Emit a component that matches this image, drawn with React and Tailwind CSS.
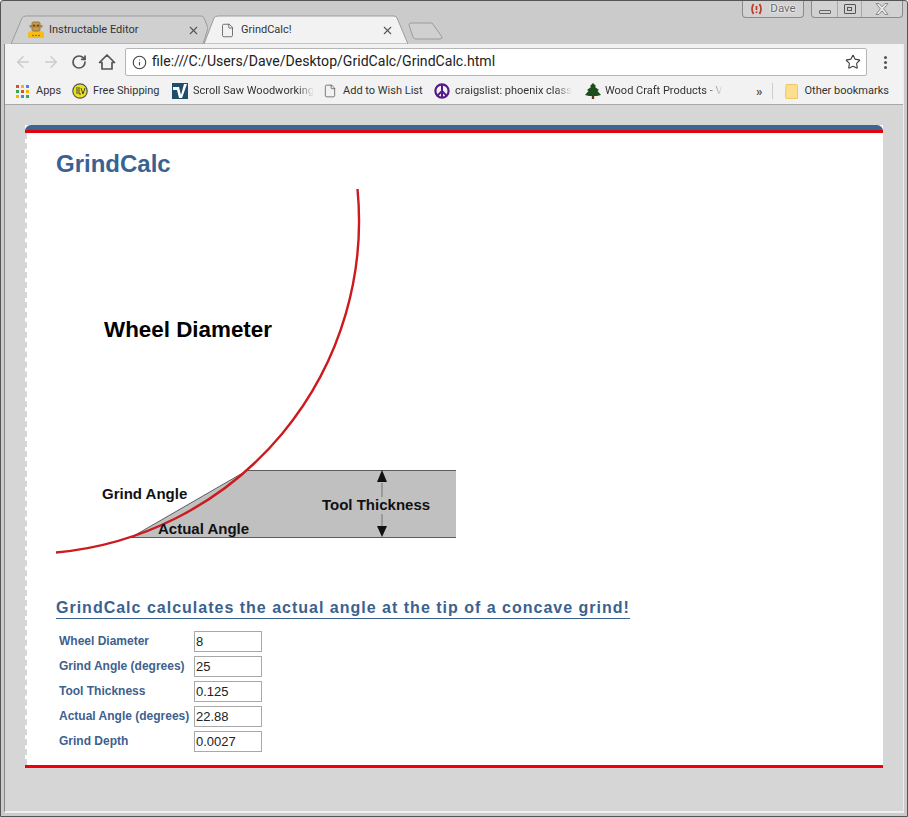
import React from "react";
import { ArrowLeft, ArrowRight, RotateCw, Info, Star, X, File } from "lucide-react";

const chrome = { fontFamily: 'Roboto, "Noto Sans", sans-serif' };

function RobotIcon() {
  return (
    <svg width="18" height="18" viewBox="0 0 18 18" className="shrink-0">
      <path d="M1 17 V13 Q1 10 5 10 H13 Q17 10 17 13 V17 Z" fill="#f6bd16" />
      <rect x="5" y="1" width="8" height="9" rx="1.5" fill="#c89a4a" stroke="#8a6a30" strokeWidth="0.8" />
      <rect x="2.5" y="4" width="13" height="2.5" fill="#a9834a" />
      <circle cx="7" cy="4.5" r="1" fill="#5b3a1a" />
      <circle cx="11" cy="4.5" r="1" fill="#5b3a1a" />
      <circle cx="6" cy="14.5" r="0.8" fill="#7a5a10" />
      <circle cx="9" cy="14.5" r="0.8" fill="#7a5a10" />
      <circle cx="12" cy="14.5" r="0.8" fill="#7a5a10" />
    </svg>
  );
}

function AppsIcon() {
  const c = ["#dc4a38", "#f4b400", "#4285f4", "#34a853", "#dc4a38", "#f4b400", "#f4b400", "#4285f4", "#34a853"];
  return (
    <span className="grid grid-cols-3 gap-[2px] w-[13px] h-[13px] shrink-0">
      {c.map((col, i) => (
        <span key={i} className="w-[3px] h-[3px]" style={{ background: col }} />
      ))}
    </span>
  );
}

function LvIcon() {
  return (
    <svg width="16" height="16" viewBox="0 0 16 16" className="shrink-0">
      <circle cx="8" cy="8" r="7.2" fill="#e8e020" stroke="#555" strokeWidth="1.2" />
      <path d="M5 4 V11 M7 4 V11 H9 M9 5 L11 11 L13 5" fill="none" stroke="#444" strokeWidth="1" />
    </svg>
  );
}

function ScrollIcon() {
  return (
    <svg width="16" height="16" viewBox="0 0 16 16" className="shrink-0">
      <rect width="16" height="16" fill="#1f4e6b" />
      <path d="M1 4 H7 L9 12 L12 1 H15 L10 15 H7 L5 7 H1 Z" fill="#fff" />
    </svg>
  );
}

function PeaceIcon() {
  return (
    <svg width="16" height="16" viewBox="0 0 16 16" className="shrink-0">
      <circle cx="8" cy="8" r="6.6" fill="none" stroke="#551a8b" strokeWidth="2.2" />
      <path d="M8 1.5 V14.5 M8 8 L3.5 12.6 M8 8 L12.5 12.6" stroke="#551a8b" strokeWidth="2" fill="none" />
    </svg>
  );
}

function TreeIcon() {
  return (
    <svg width="16" height="16" viewBox="0 0 16 16" className="shrink-0">
      <path d="M8 0 L11 3 L10 4 L14 7 L12.5 8 L16 12 L12 13 H4 L0 12 L3.5 8 L2 7 L6 4 L5 3 Z" fill="#1d4d1d" />
      <rect x="6.8" y="13" width="2.4" height="3" fill="#5a3a1a" />
    </svg>
  );
}

function FolderIcon() {
  return (
    <svg width="13" height="15" viewBox="0 0 13 15" className="shrink-0">
      <path d="M1 1 Q1 0.5 1.5 0.5 H11.5 Q12.5 0.5 12.5 1.5 V14.5 H1.5 Q0.5 14.5 0.5 13.5 Z" fill="#fbdf8c" stroke="#ecc868" />
    </svg>
  );
}

function Tab({ active, icon, title, width, viewBox, d, rowClass, gapClass }) {
  return (
    <div className={`relative h-[29px] flex items-center ${width}`}>
      <svg className="absolute inset-0 w-full h-full" viewBox={viewBox}>
        <path d={d} fill={active ? "#f2f2f2" : "#d0d0d0"} stroke="#9b9b9b" />
      </svg>
      <div className={`relative flex items-center w-full pt-[1px] ${rowClass}`}>
        {icon}
        <span className={`${gapClass} text-[11px] text-[#333] flex-1 whitespace-nowrap`}>{title}</span>
        <X size={13} strokeWidth={2} className="text-[#555]" />
      </div>
    </div>
  );
}

function Bookmark({ icon, label, className, fade }) {
  return (
    <div className={`flex items-center ${className}`}>
      {icon}
      <span
        className="shrink-0 text-[11px] text-[#333] whitespace-nowrap"
        style={fade ? { maskImage: "linear-gradient(to right, black 86%, transparent)" } : undefined}
      >
        {label}
      </span>
    </div>
  );
}

function Diagram() {
  return (
    <div className="relative w-[402px] h-[368px]">
      <svg className="absolute inset-0" width="402" height="368" viewBox="0 0 402 368">
        <polygon points="75,348.5 191,281.5 400,281.5 400,348.5" fill="#c0c0c0" />
        <path d="M75 348.5 L191 281.5 H400 M75 348.5 H400" fill="none" stroke="#5c5c5c" strokeWidth="1" />
        <path d="M326 294 V308" stroke="#777" strokeWidth="1" />
        <path d="M326 281 L321 293 H331 Z" fill="#111" />
        <path d="M326 325 V338" stroke="#777" strokeWidth="1" />
        <path d="M326 348 L321 337 H331 Z" fill="#111" />
        <path d="M301.5 0 A 333 333 0 0 1 0 363.5" fill="none" stroke="#cc1a1f" strokeWidth="2.4" />
      </svg>
      <span className="absolute left-[48px] top-[127px] text-[22.4px] leading-[28px] font-bold text-black whitespace-nowrap">Wheel Diameter</span>
      <span className="absolute left-[46px] top-[296px] text-[15px] leading-[18px] font-bold text-[#111] whitespace-nowrap">Grind Angle</span>
      <span className="absolute left-[102px] top-[331px] text-[15px] leading-[18px] font-bold text-[#111] whitespace-nowrap">Actual Angle</span>
      <span className="absolute left-[266px] top-[307px] text-[15px] leading-[18px] font-bold text-[#111] whitespace-nowrap">Tool Thickness</span>
    </div>
  );
}

const rows = [
  ["Wheel Diameter", "8"],
  ["Grind Angle (degrees)", "25"],
  ["Tool Thickness", "0.125"],
  ["Actual Angle (degrees)", "22.88"],
  ["Grind Depth", "0.0027"],
];

export default function App() {
  return (
    <div className="w-[908px] h-[817px] overflow-hidden bg-[#cbcbcb] border border-[#555] rounded-t-[3px] flex flex-col" style={chrome}>
      <div className="h-[43px] flex justify-between pl-[10px] pr-[4px] shrink-0">
        <div className="flex items-end">
          <Tab
            width="w-[197px]"
            viewBox="0 0 197 29"
            d="M0 29 L11 3 Q12 1 15 1 H190 Q192 1 193 3 L197 13 L192 29 Z"
            rowClass="pl-[16px] pr-[8px]"
            gapClass="ml-[4px]"
            title="Instructable Editor"
            icon={<RobotIcon />}
          />
          <div className="-ml-[4px]">
            <Tab
              active
              width="w-[204px]"
              viewBox="0 0 204 29"
              d="M0 29 L10 3 Q11 1 14 1 H190 Q192 1 193 3 L204 29 Z"
              rowClass="pl-[16px] pr-[14px]"
              gapClass="ml-[6px]"
              title="GrindCalc!"
              icon={<File size={15} strokeWidth={1.3} className="text-[#555]" />}
            />
          </div>
          <svg width="35" height="18" viewBox="0 0 35 18" className="ml-0 mb-[4px]">
            <path d="M1 3 Q1 1 3 1 H24 L34 15 Q34 17 32 17 H8 Q6 17 5 15 Z" fill="#d0d0d0" stroke="#9b9b9b" strokeLinejoin="round" />
          </svg>
        </div>
        <div className="flex items-start gap-[7px]">
          <div className="h-[17px] w-[62px] border border-t-0 border-[#8b8b8b] rounded-b-[4px] bg-[#d2d2d2] flex items-center justify-center gap-[7px]">
            <svg width="13" height="12" viewBox="0 0 13 12">
              <path d="M3.5 1 Q0.5 6 3.5 11 M9.5 1 Q12.5 6 9.5 11 M6.5 3 V7 M6.5 8.5 V10" fill="none" stroke="#c0392b" strokeWidth="1.7" />
            </svg>
            <span className="text-[11.5px] leading-none text-[#666] [text-shadow:0_0_2px_white,0_0_2px_white]">Dave</span>
          </div>
          <div className="h-[17px] w-[92px] border border-t-0 border-[#8b8b8b] rounded-b-[4px] bg-[#d2d2d2] flex items-center">
            <div className="w-[26px] h-full flex items-end justify-center pb-[3px] border-r border-[#a8a8a8]">
              <span className="w-[12px] h-[4px] border border-[#666] rounded-[1px]" />
            </div>
            <div className="w-[24px] h-full flex items-center justify-center border-r border-[#a8a8a8]">
              <span className="w-[12px] h-[10px] border border-[#555] rounded-[1px] flex items-center justify-center">
                <span className="w-[5px] h-[4px] border border-[#555]" />
              </span>
            </div>
            <div className="flex-1 flex items-center justify-center">
              <svg width="14" height="12" viewBox="0 0 14 12">
                <path d="M1 0.5 H4 L7 3.8 L10 0.5 H13 L8.7 5.8 L13 11.5 H10 L7 7.8 L4 11.5 H1 L5.3 5.8 Z" fill="#e8e8e8" stroke="#777" strokeWidth="0.8" />
              </svg>
            </div>
          </div>
        </div>
      </div>

      <div className="ml-[3px] mr-[3px] flex-1 flex flex-col border-b-[2px] border-x border-b-[#f0f0f0] border-r-[#ededed] border-l-[#888] min-h-0 mb-[3px]">
        <div className="h-[34px] bg-[#f2f2f2] flex items-center pt-[2px] px-[9px] shrink-0">
          <ArrowLeft size={18} strokeWidth={2} className="text-[#ccc]" />
          <ArrowRight size={18} strokeWidth={2} className="text-[#ccc] ml-[10px]" />
          <RotateCw size={16} strokeWidth={2.6} className="text-[#555] ml-[11px]" />
          <svg width="18" height="18" viewBox="0 0 18 18" className="ml-[11px] text-[#555]">
            <path d="M9 2 L1.5 9.5 H4 V16 H14 V9.5 H16.5 Z" fill="none" stroke="currentColor" strokeWidth="1.7" strokeLinejoin="round" />
          </svg>
          <div className="ml-[9px] w-[742px] h-[28px] bg-white border border-[#b5b5b5] rounded-[2px] flex items-center pl-[6px] pr-[5px]">
            <Info size={15} strokeWidth={1.8} className="text-[#444]" />
            <span className="ml-[5px] text-[14.1px] text-[#222] flex-1">file:///C:/Users/Dave/Desktop/GridCalc/GrindCalc.html</span>
            <Star size={16} strokeWidth={1.7} className="text-[#444]" />
          </div>
          <div className="ml-[17px] flex flex-col gap-[2px]">
            <span className="w-[3px] h-[3px] rounded-full bg-[#555]" />
            <span className="w-[3px] h-[3px] rounded-full bg-[#555]" />
            <span className="w-[3px] h-[3px] rounded-full bg-[#555]" />
          </div>
        </div>

        <div className="h-[27px] bg-[#f2f2f2] border-b border-[#a8a8a8] flex items-center pl-[11px] shrink-0">
          <Bookmark className="w-[56px] gap-[7px]" icon={<AppsIcon />} label="Apps" />
          <Bookmark className="w-[100px] gap-[5px]" icon={<LvIcon />} label="Free Shipping" />
          <Bookmark className="w-[151px] gap-[5px]" icon={<ScrollIcon />} label="Scroll Saw Woodworking" fade />
          <Bookmark className="w-[111px] gap-[6px]" icon={<File size={14} strokeWidth={1.3} className="text-[#555]" />} label="Add to Wish List" />
          <Bookmark className="w-[151px] gap-[5px]" icon={<PeaceIcon />} label="craigslist: phoenix class" fade />
          <Bookmark className="w-[137px] gap-[4px]" icon={<TreeIcon />} label="Wood Craft Products - V" fade />
          <span className="ml-[34px] text-[13px] leading-none font-bold text-[#555]">»</span>
          <span className="ml-[9px] w-px h-[16px] bg-[#ccc]" />
          <Bookmark className="ml-[12px] gap-[7px]" icon={<FolderIcon />} label="Other bookmarks" />
        </div>

        <div className="flex-1 bg-[#d6d6d6] pt-[20px] px-[20px] min-h-0" style={{ fontFamily: '"Liberation Sans", Arial, sans-serif' }}>
          <div className="w-[858px] h-[643px] bg-white flex flex-col">
            <div className="h-[8px] bg-[#3a6595] rounded-t-[6px] shrink-0 flex flex-col justify-end">
              <div className="h-[3px] bg-[#e0040b]" />
            </div>
            <div className="flex-1 border-l-2 border-dashed border-[#d6d6d6] pl-[29px] pt-[17px] flex flex-col">
              <h1 className="text-[24px] leading-[28px] font-bold text-[#3a6291]">GrindCalc</h1>
              <div className="mt-[11px]">
                <Diagram />
              </div>
              <h2 className="mt-[42px] w-[574px] border-b border-[#3a6291] text-[16px] leading-[18px] pb-[1px] font-bold tracking-[1px] whitespace-nowrap text-[#3a6291]">
                GrindCalc calculates the actual angle at the tip of a concave grind!
              </h2>
              <div className="mt-[12px] flex flex-col gap-[4px]">
                {rows.map(([label, value]) => (
                  <div key={label} className="flex items-center h-[21px]">
                    <span className="w-[138px] pl-[3px] pb-[2px] text-[12px] font-bold text-[#3f5f8f] whitespace-nowrap">{label}</span>
                    <input
                      readOnly
                      value={value}
                      className="w-[68px] h-[21px] border border-[#a9a9a9] px-[1px] text-[13px] text-[#222] outline-none"
                    />
                  </div>
                ))}
              </div>
            </div>
            <div className="h-[3px] bg-[#f00008] shrink-0" />
          </div>
        </div>
      </div>
    </div>
  );
}
